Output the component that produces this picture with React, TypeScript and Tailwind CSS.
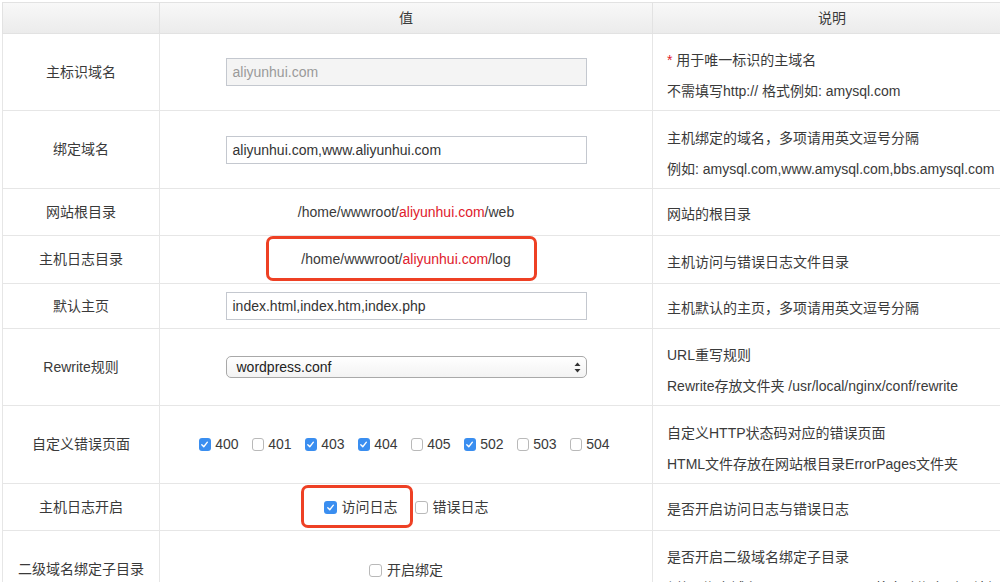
import React from "react";

const FONT = '"Liberation Sans", "Noto Sans CJK SC", sans-serif';

type CheckProps = { checked?: boolean; label: string; className?: string };

const Check = ({ checked, label, className }: CheckProps) => (
  <span className={`inline-flex items-center ${className ?? "gap-[4px]"}`}>
    {checked ? (
      <span className="flex h-[13px] w-[13px] items-center justify-center rounded-[3px] bg-[#3a8ef0]">
        <svg width="9" height="9" viewBox="0 0 10 10">
          <path d="M2 5.2 L4.2 7.5 L8.2 2.4" fill="none" stroke="#fff" strokeWidth="1.5" strokeLinecap="round" strokeLinejoin="round" />
        </svg>
      </span>
    ) : (
      <span className="h-[13px] w-[13px] rounded-[3px] border border-[#b9b9b9] bg-white" />
    )}
    <span>{label}</span>
  </span>
);

const Path = ({ tail }: { tail: string }) => (
  <span>
    /home/wwwroot/<span className="text-[#e0202c]">aliyunhui.com</span>/{tail}
  </span>
);

const codes: [string, boolean][] = [
  ["400", true],
  ["401", false],
  ["403", true],
  ["404", true],
  ["405", false],
  ["502", true],
  ["503", false],
  ["504", false],
];

type Row = {
  label: string;
  h: string;
  value: React.ReactNode;
  desc: React.ReactNode[];
};

const inputCls =
  "mx-auto block h-[28px] w-[361px] border border-[#c4c8cf] px-[6px] text-left text-[14px] leading-[26px]";

const rows: Row[] = [
  {
    label: "主标识域名",
    h: "h-[77px]",
    value: <div className={`${inputCls} bg-[#f4f4f4] text-[#9a9a9a]`}>aliyunhui.com</div>,
    desc: [
      <>
        <span className="text-[#e0202c]">*</span> 用于唯一标识的主域名
      </>,
      "不需填写http:// 格式例如: amysql.com",
    ],
  },
  {
    label: "绑定域名",
    h: "h-[78px]",
    value: <div className={`${inputCls} bg-white text-[#333]`}>aliyunhui.com,www.aliyunhui.com</div>,
    desc: ["主机绑定的域名，多项请用英文逗号分隔", "例如: amysql.com,www.amysql.com,bbs.amysql.com"],
  },
  {
    label: "网站根目录",
    h: "h-[47px]",
    value: <Path tail="web" />,
    desc: ["网站的根目录"],
  },
  {
    label: "主机日志目录",
    h: "h-[48px]",
    value: (
      <span className="relative inline-block">
        <Path tail="log" />
        <span className="absolute -left-[35px] -right-[26px] -top-[13px] -bottom-[11px] rounded-[7px] border-[3px] border-[#ee4024]" />
      </span>
    ),
    desc: ["主机访问与错误日志文件目录"],
  },
  {
    label: "默认主页",
    h: "h-[45px]",
    value: <div className={`${inputCls} bg-white text-[#333]`}>index.html,index.htm,index.php</div>,
    desc: ["主机默认的主页，多项请用英文逗号分隔"],
  },
  {
    label: "Rewrite规则",
    h: "h-[77px]",
    value: (
      <div className="mx-auto flex h-[22px] w-[361px] items-center justify-between rounded-[5px] border border-[#a9a9a9] bg-gradient-to-b from-white to-[#f3f3f3] pl-[10px] pr-[5px] text-[14px] text-[#222]">
        <span>wordpress.conf</span>
        <svg width="7" height="11" viewBox="0 0 7 11">
          <path d="M3.5 0.5 L6.5 4 L0.5 4 Z" fill="#333" />
          <path d="M3.5 10.5 L6.5 7 L0.5 7 Z" fill="#333" />
        </svg>
      </div>
    ),
    desc: ["URL重写规则", "Rewrite存放文件夹 /usr/local/nginx/conf/rewrite"],
  },
  {
    label: "自定义错误页面",
    h: "h-[78px]",
    value: (
      <div className="flex justify-center gap-[13px] pr-[4px]">
        {codes.map(([c, on]) => (
          <Check key={c} checked={on} label={c} className="w-[40px] gap-[4px]" />
        ))}
      </div>
    ),
    desc: ["自定义HTTP状态码对应的错误页面", "HTML文件存放在网站根目录ErrorPages文件夹"],
  },
  {
    label: "主机日志开启",
    h: "h-[47px]",
    value: (
      <div className="flex justify-center gap-[17px]">
        <span className="relative inline-flex">
          <Check checked label="访问日志" className="gap-[5px]" />
          <span className="absolute -left-[23px] -right-[15px] -top-[12px] -bottom-[10px] rounded-[7px] border-[3px] border-[#ee4024]" />
        </span>
        <Check label="错误日志" className="gap-[5px]" />
      </div>
    ),
    desc: ["是否开启访问日志与错误日志"],
  },
  {
    label: "二级域名绑定子目录",
    h: "h-[77px]",
    value: (
      <div className="flex justify-center pt-[2px]">
        <Check label="开启绑定" className="gap-[5px]" />
      </div>
    ),
    desc: ["是否开启二级域名绑定子目录", "例如: 绑定域名 www.amysql.com 将自动绑定到网站根目录下的 www 子目录"],
  },
];

export default function App() {
  return (
    <div
      className="h-[582px] w-[1000px] overflow-hidden bg-white pl-[2px] pt-[2px] text-[14px] text-[#3a3a3a]"
      style={{ fontFamily: FONT }}
    >
      <table className="w-[1010px] table-fixed border-collapse">
        <colgroup>
          <col className="w-[157px]" />
          <col className="w-[493px]" />
          <col />
        </colgroup>
        <thead>
          <tr className="h-[31px] bg-gradient-to-b from-[#f8f8f8] to-[#ebebeb]">
            <th className="border border-[#e2e2e2] font-normal" />
            <th className="border border-[#e2e2e2] font-normal">值</th>
            <th className="border border-[#e2e2e2] font-normal">说明</th>
          </tr>
        </thead>
        <tbody>
          {rows.map((r) => (
            <tr key={r.label} className={r.h}>
              <td className="border border-[#e6e6e6] text-center align-middle">{r.label}</td>
              <td className="border border-[#e6e6e6] text-center align-middle">{r.value}</td>
              <td
                className={`border border-[#e6e6e6] pl-[14px] align-middle whitespace-nowrap ${
                  r.desc.length > 1 ? "pt-[8px]" : "pt-[5px]"
                }`}
              >
                {r.desc.map((d, i) => (
                  <p key={i} className="leading-[31px]">
                    {d}
                  </p>
                ))}
              </td>
            </tr>
          ))}
        </tbody>
      </table>
    </div>
  );
}
